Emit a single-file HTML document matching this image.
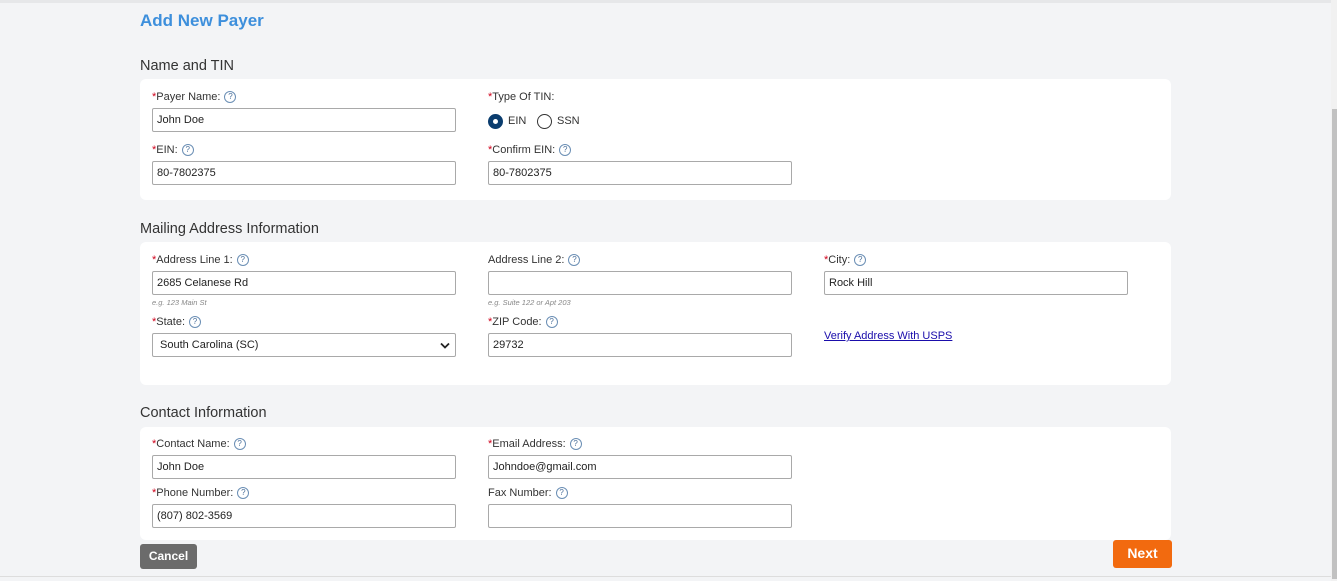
<!DOCTYPE html>
<html><head><meta charset="utf-8"><style>
*{box-sizing:border-box;margin:0;padding:0}
body{width:1337px;height:581px;overflow:hidden;background:#f3f4f6;font-family:"Liberation Sans",Arial,sans-serif;color:#333;position:relative}
.a{position:absolute}
.title{left:140px;top:11px;font-size:17px;font-weight:bold;color:#3d8fdc}
.h{left:140px;font-size:14.5px;color:#333}
.panel{left:140px;width:1031px;background:#fff;border-radius:6px}
.lab{font-size:11px;color:#333;white-space:nowrap;display:flex;align-items:center}
.lab b{color:#d0021b;font-weight:normal}
.q{display:inline-block;width:12px;height:12px;border:1px solid #6b8fb5;border-radius:50%;font-size:8px;line-height:10px;text-align:center;color:#4a6f9a;margin-left:4px}
.in{width:304px;height:24px;border:1px solid #a9a9a9;border-radius:2px;font-size:11px;line-height:22px;padding-left:4px;color:#222;background:#fff}
.hint{font-size:7.5px;font-style:italic;color:#888}
.c1{left:152px}.c2{left:488px}.c3{left:824px}
</style></head><body>
<div class="a" style="left:0;top:0;width:1337px;height:3px;background:#e6e7e9"></div>
<div class="a" style="left:1331px;top:0;width:6px;height:581px;background:#f1f1f1"></div>
<div class="a" style="left:1332px;top:109px;width:5px;height:470px;background:#c1c1c1"></div>
<div class="a title">Add New Payer</div>

<div class="a h" style="top:58px">Name and TIN</div>
<div class="a panel" style="top:79px;height:121px"></div>
<div class="a lab c1" style="top:91px"><b>*</b>Payer Name:<span class="q">?</span></div>
<div class="a in c1" style="top:108px">John Doe</div>
<div class="a lab c2" style="top:91px"><b>*</b>Type Of TIN:</div>
<div class="a" style="left:488px;top:114px;width:15px;height:15px;border-radius:50%;background:#0b3d6e;border:1px solid #0b3d6e"><div style="margin:4px;width:5px;height:5px;border-radius:50%;background:#fff"></div></div>
<div class="a lab" style="left:508px;top:115px">EIN</div>
<div class="a" style="left:537px;top:114px;width:15px;height:15px;border-radius:50%;border:1.5px solid #333"></div>
<div class="a lab" style="left:557px;top:115px">SSN</div>
<div class="a lab c1" style="top:144px"><b>*</b>EIN:<span class="q">?</span></div>
<div class="a in c1" style="top:161px">80-7802375</div>
<div class="a lab c2" style="top:144px"><b>*</b>Confirm EIN:<span class="q">?</span></div>
<div class="a in c2" style="top:161px">80-7802375</div>

<div class="a h" style="top:221px">Mailing Address Information</div>
<div class="a panel" style="top:242px;height:143px"></div>
<div class="a lab c1" style="top:254px"><b>*</b>Address Line 1:<span class="q">?</span></div>
<div class="a in c1" style="top:271px">2685 Celanese Rd</div>
<div class="a hint c1" style="top:298px">e.g. 123 Main St</div>
<div class="a lab c2" style="top:254px">Address Line 2:<span class="q">?</span></div>
<div class="a in c2" style="top:271px"></div>
<div class="a hint c2" style="top:298px">e.g. Suite 122 or Apt 203</div>
<div class="a lab c3" style="top:254px"><b>*</b>City:<span class="q">?</span></div>
<div class="a in c3" style="top:271px">Rock Hill</div>
<div class="a lab c1" style="top:316px"><b>*</b>State:<span class="q">?</span></div>
<div class="a in c1" style="top:333px;padding-left:7px">South Carolina (SC)<svg style="position:absolute;right:5px;top:8px" width="10" height="7" viewBox="0 0 10 7"><path d="M1 1.5L5 5.5L9 1.5" stroke="#222" stroke-width="1.8" fill="none"/></svg></div>
<div class="a lab c2" style="top:316px"><b>*</b>ZIP Code:<span class="q">?</span></div>
<div class="a in c2" style="top:333px">29732</div>
<div class="a c3" style="top:330px;font-size:11px;color:#1a0dab;text-decoration:underline">Verify Address With USPS</div>

<div class="a h" style="top:405px">Contact Information</div>
<div class="a panel" style="top:427px;height:113px"></div>
<div class="a lab c1" style="top:438px"><b>*</b>Contact Name:<span class="q">?</span></div>
<div class="a in c1" style="top:455px">John Doe</div>
<div class="a lab c2" style="top:438px"><b>*</b>Email Address:<span class="q">?</span></div>
<div class="a in c2" style="top:455px">Johndoe@gmail.com</div>
<div class="a lab c1" style="top:487px"><b>*</b>Phone Number:<span class="q">?</span></div>
<div class="a in c1" style="top:504px">(807) 802-3569</div>
<div class="a lab c2" style="top:487px">Fax Number:<span class="q">?</span></div>
<div class="a in c2" style="top:504px"></div>

<div class="a" style="left:140px;top:544px;width:57px;height:25px;background:#6b6b6b;border-radius:3px;color:#fff;font-size:12px;font-weight:bold;text-align:center;line-height:25px">Cancel</div>
<div class="a" style="left:1113px;top:540px;width:59px;height:28px;background:#f26a0f;border-radius:3px;color:#fff;font-size:14px;font-weight:bold;text-align:center;line-height:27px">Next</div>
<div class="a" style="left:0;top:576px;width:1331px;height:1px;background:#ddd"></div>
</body></html>
